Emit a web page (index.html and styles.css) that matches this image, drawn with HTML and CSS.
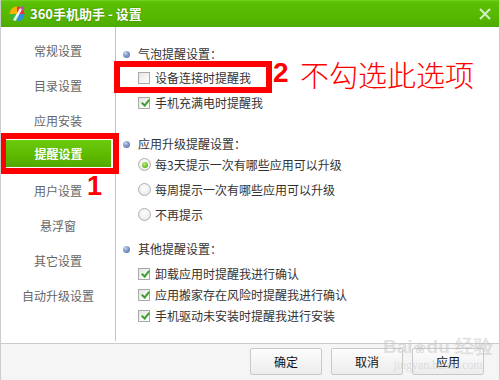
FILE: index.html
```html
<!DOCTYPE html>
<html>
<head>
<meta charset="utf-8">
<link rel="stylesheet" href="styles.css">
</head>
<body>
<div class="window">
  <div class="titlebar">
    <svg class="logo" width="16" height="16" viewBox="0 0 16 16">
      <path d="M8 8 L8 0.5 A7.5 7.5 0 0 1 15.5 8 Z" fill="#e8304a"/>
      <path d="M8 8 L15.5 8 A7.5 7.5 0 0 1 8 15.5 Z" fill="#2f8fe0"/>
      <path d="M8 8 L8 15.5 A7.5 7.5 0 0 1 0.5 8 Z" fill="#3cb83c"/>
      <path d="M8 8 L0.5 8 A7.5 7.5 0 0 1 8 0.5 Z" fill="#f4b400"/>
      <path d="M4 14 L11 2 L13 3.5 L6.5 15 Z" fill="#ffffff" opacity="0.9"/>
      <circle cx="13.5" cy="2" r="1.8" fill="#b050d0"/>
    </svg>
    <span class="title">360手机助手 - 设置</span>
    <svg class="close" width="12" height="12" viewBox="0 0 12 12">
      <path d="M1 1 L11 11 M11 1 L1 11" stroke="#d6efc2" stroke-width="2"/>
    </svg>
  </div>
  <div class="main">
    <div class="sidebar">
      <div class="nav">常规设置</div>
      <div class="nav">目录设置</div>
      <div class="nav">应用安装</div>
      <div class="nav active"><span class="active-box">提醒设置</span></div>
      <div class="nav">用户设置</div>
      <div class="nav">悬浮窗</div>
      <div class="nav">其它设置</div>
      <div class="nav">自动升级设置</div>
    </div>
    <div class="content">
      <div class="group-title first"><span class="bullet"></span>气泡提醒设置：</div>
      <div class="opt tall gap3"><span class="check"></span>设备连接时提醒我</div>
      <div class="opt tall"><span class="check on"></span>手机充满电时提醒我</div>

      <div class="group-title second"><span class="bullet"></span>应用升级提醒设置：</div>
      <div class="opt tall"><span class="radio on"></span>每3天提示一次有哪些应用可以升级</div>
      <div class="opt tall"><span class="radio"></span>每周提示一次有哪些应用可以升级</div>
      <div class="opt tall"><span class="radio"></span>不再提示</div>

      <div class="group-title third"><span class="bullet"></span>其他提醒设置：</div>
      <div class="opt gap6"><span class="check on"></span>卸载应用时提醒我进行确认</div>
      <div class="opt"><span class="check on"></span>应用搬家存在风险时提醒我进行确认</div>
      <div class="opt"><span class="check on"></span>手机驱动未安装时提醒我进行安装</div>
    </div>
  </div>
  <div class="footer">
    <button class="btn">确定</button>
    <button class="btn">取消</button>
    <button class="btn">应用</button>
  </div>

  <div class="mark mark-nav"></div>
  <div class="num num-1">1</div>
  <div class="mark mark-opt"></div>
  <div class="num num-2">2</div>
  <div class="note">不勾选此选项</div>
  <div class="watermark"><span class="wm-big">Bai<span class="paw">❀</span>du 经验</span><span class="wm-small">jingyan.baidu.com</span></div>
</div>
</body>
</html>
```
FILE: styles.css
```css
* { box-sizing: border-box; }
html, body { margin: 0; padding: 0; background: #fff; }
body {
  font-family: "Noto Sans CJK SC", "Microsoft YaHei", sans-serif;
  font-size: 12px;
  color: #333;
}
.window {
  position: relative;
  width: 500px;
  height: 380px;
  display: flex;
  flex-direction: column;
  border-left: 1px solid #c9cdcf;
  border-right: 1px solid #c9cdcf;
  overflow: hidden;
}
.titlebar {
  height: 27px;
  flex: none;
  display: flex;
  align-items: center;
  padding-left: 9px;
  margin: 0 -1px;
  background: linear-gradient(#62c60e 0px, #5bbf04 2px, #56b700 16px, #4eaa00 26px, #4a9f00 27px);
  border-top: 1px solid #6fd01c;
}
.logo { display: block; margin-right: 5px; margin-top: -1px; }
.title {
  color: #fff;
  font-weight: bold;
  font-size: 13px;
  line-height: 16px;
  text-shadow: 0 0 2px rgba(40, 90, 0, 0.6);
}
.close { margin-left: auto; margin-right: 9px; }
.main {
  flex: 1;
  display: flex;
  padding-bottom: 2px;
}
.sidebar {
  width: 115px;
  flex: none;
  border-right: 1px solid #b9c5c8;
  padding-top: 6px;
}
.nav {
  height: 35px;
  display: flex;
  align-items: center;
  justify-content: center;
  color: #666;
  font-size: 12px;
}
.nav.active { padding: 0 4px 0 5px; }
.active-box {
  width: 100%;
  height: 27px;
  margin-top: -4px;
  display: flex;
  align-items: center;
  justify-content: center;
  color: #fff;
  font-weight: bold;
  background: linear-gradient(#6ccb0c, #5cb800 60%, #52a900);
}
.content {
  flex: 1;
  padding-top: 19px;
  padding-left: 7px;
}
.group-title {
  height: 16px;
  line-height: 16px;
  display: flex;
  align-items: center;
}
.group-title.second { margin-top: 21px; }
.group-title.third { margin-top: 14px; }
.bullet {
  width: 7px;
  height: 7px;
  border-radius: 50%;
  margin-right: 8px;
  background: radial-gradient(circle at 35% 30%, #c8d6ee 0, #7f98c6 45%, #4d6aa2 100%);
}
.opt {
  height: 21px;
  display: flex;
  align-items: center;
  padding-left: 15px;
}
.opt.tall { height: 25px; }
.opt.gap3 { margin-top: 3px; }
.opt.gap6 { margin-top: 6px; }
.check {
  width: 12px;
  height: 12px;
  margin-right: 5px;
  border: 1px solid #a9a9a9;
  background: linear-gradient(135deg, #e6e6e6, #ffffff);
  position: relative;
  flex: none;
}
.check.on::after {
  content: "";
  position: absolute;
  left: 2px;
  top: 1px;
  width: 3px;
  height: 6px;
  border-right: 2px solid #3aa02a;
  border-bottom: 2px solid #3aa02a;
  transform: rotate(40deg);
  transform-origin: center;
  left: 3.5px;
  top: 0.5px;
}
.radio {
  width: 13px;
  height: 13px;
  border-radius: 50%;
  margin-right: 4px;
  border: 1px solid #b0b0b0;
  background: radial-gradient(circle at 50% 40%, #ffffff 0, #f2f2f2 50%, #dedede 100%);
  position: relative;
  flex: none;
}
.radio.on::after {
  content: "";
  position: absolute;
  left: 2.5px;
  top: 2.5px;
  width: 6px;
  height: 6px;
  border-radius: 50%;
  background: radial-gradient(circle at 40% 35%, #b8ec7a 0, #6cc020 60%, #4a9a10 100%);
}
.footer {
  height: 37px;
  flex: none;
  border-top: 1px solid #cbcbcb;
  background: #f5f5f5;
  display: flex;
  justify-content: flex-end;
  align-items: center;
  gap: 9px;
  padding-right: 15px;
  padding-bottom: 2px;
}
.btn {
  width: 72px;
  height: 27px;
  border: 1px solid #c9c9c9;
  border-radius: 2px;
  background: linear-gradient(#fdfdfd, #ececec);
  font-family: "Noto Sans CJK SC", sans-serif;
  font-size: 12px;
  color: #111;
  padding: 0;
}
.mark {
  position: absolute;
  border: 6px solid #ff0000;
}
.mark-nav { left: -1px; top: 133px; width: 119px; height: 41px; }
.mark-opt { left: 113px; top: 61px; width: 158px; height: 32px; }
.num {
  position: absolute;
  color: #ff0000;
  font-family: "Liberation Sans", sans-serif;
  font-weight: bold;
  font-size: 28px;
  line-height: 28px;
}
.num-1 { left: 86px; top: 172px; font-size: 27px; }
.num-2 { left: 272px; top: 59px; }
.note {
  position: absolute;
  left: 299px;
  top: 57px;
  color: #ff0000;
  font-family: "Noto Sans CJK SC", sans-serif;
  font-size: 29px;
  line-height: 34px;
  font-weight: 300;
}
.watermark {
  position: absolute;
  left: 382px;
  top: 337px;
  display: flex;
  flex-direction: column;
  align-items: center;
  color: rgba(190, 190, 190, 0.45);
  pointer-events: none;
}
.wm-big {
  font-family: "Liberation Sans", sans-serif;
  font-size: 19px;
  font-weight: bold;
  line-height: 20px;
}
.paw { font-size: 14px; margin: 0 1px; }
.wm-small {
  font-family: "Liberation Serif", serif;
  font-size: 12px;
  line-height: 14px;
}
```
